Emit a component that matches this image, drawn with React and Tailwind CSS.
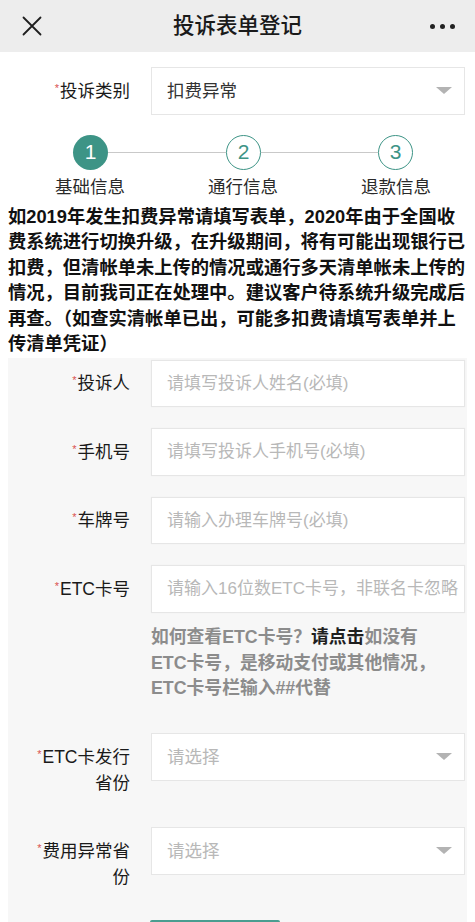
import React from "react";

const FONT = "font-['Liberation_Sans','Noto_Sans_CJK_SC',sans-serif]";

function Star() {
  return (
    <span className="relative top-[-5px] text-[11px] leading-none text-[#d9534f] mr-[1px]">*</span>
  );
}

function Caret() {
  return (
    <svg width="16" height="7" viewBox="0 0 16 7" className="shrink-0">
      <path d="M0 0 L16 0 L8 7 Z" fill="#b3b3b3" />
    </svg>
  );
}

function TextBox({ placeholder }) {
  return (
    <div className="w-[314px] h-[47.5px] bg-white border border-[#e6e6e6] flex items-center pl-[15px] overflow-hidden whitespace-nowrap text-[17px] text-[#b8b8b8] shadow-[0_0_1px_rgba(0,0,0,0.05)]">
      {placeholder}
    </div>
  );
}

function SelectBox({ value, placeholder }) {
  return (
    <div className="w-[314px] h-[47.5px] bg-white border border-[#e6e6e6] flex items-center justify-between pl-[15px] pr-[12px] text-[17.5px]">
      <span className={value ? "text-[#333]" : "text-[#b8b8b8]"}>{value || placeholder}</span>
      <Caret />
    </div>
  );
}

function Row({ label, children }) {
  return (
    <div className="flex items-center">
      <div className="w-[122px] text-right text-[17.5px] text-[#1a1a1a] leading-[26px]">
        <Star />
        {label}
      </div>
      <div className="ml-[21px]">{children}</div>
    </div>
  );
}

function TwoLineRow({ line1, line2, children }) {
  return (
    <div className="flex items-start">
      <div className="w-[122px] text-right text-[17.5px] text-[#1a1a1a] leading-[26px] pt-[11px]">
        <Star />
        {line1}
        <br />
        {line2}
      </div>
      <div className="ml-[21px]">{children}</div>
    </div>
  );
}

function Circle({ n, active }) {
  return active ? (
    <div className="w-[35px] h-[35px] rounded-full bg-[#3d9486] flex items-center justify-center text-white text-[21px] font-light shrink-0">
      {n}
    </div>
  ) : (
    <div className="w-[35px] h-[35px] rounded-full bg-white border-[1.5px] border-[#3d9486] flex items-center justify-center text-[#3d9486] text-[21px] font-light shrink-0">
      {n}
    </div>
  );
}

export default function App() {
  return (
    <div className={`${FONT} w-[475px] bg-white text-[#222]`}>
      {/* Header */}
      <div className="h-[52px] bg-[#ededed] flex items-center">
        <div className="w-[70px] pl-[22px] flex items-center">
          <svg width="20" height="20" viewBox="0 0 20 20">
            <path d="M1.5 1.5 L18.5 18.5 M18.5 1.5 L1.5 18.5" stroke="#1f1f1f" strokeWidth="1.8" strokeLinecap="round" />
          </svg>
        </div>
        <div className="flex-1 text-center text-[21.5px] text-[#1a1a1a] font-medium">投诉表单登记</div>
        <div className="w-[70px] flex items-center justify-end pr-[20px] gap-[5px]">
          <span className="w-[5px] h-[5px] rounded-full bg-[#222]" />
          <span className="w-[5px] h-[5px] rounded-full bg-[#222]" />
          <span className="w-[5px] h-[5px] rounded-full bg-[#222]" />
        </div>
      </div>

      {/* Category */}
      <div className="flex items-center mt-[15px]">
        <div className="w-[130px] text-right text-[17.5px] text-[#1a1a1a]">
          <Star />
          投诉类别
        </div>
        <div className="ml-[21px]">
          <SelectBox value="扣费异常" />
        </div>
      </div>

      {/* Stepper */}
      <div className="mt-[20px]">
        <div className="flex items-center pl-[73px]">
          <Circle n="1" active />
          <div className="w-[118px] h-px bg-[#c9c9c9]" />
          <Circle n="2" />
          <div className="w-[117px] h-px bg-[#c9c9c9]" />
          <Circle n="3" />
        </div>
        <div className="flex pl-[40px] gap-[53px] mt-[5px] text-[17.5px] leading-[24px] text-[#2a2a2a]">
          <div className="w-[100px] text-center">基础信息</div>
          <div className="w-[100px] text-center">通行信息</div>
          <div className="w-[100px] text-center">退款信息</div>
        </div>
      </div>

      {/* Notice */}
      <p className="mt-[5px] px-[8px] text-[18.3px] leading-[25.5px] font-bold text-[#111] whitespace-nowrap">
        如2019年发生扣费异常请填写表单，2020年由于全国收
        <br />
        费系统进行切换升级，在升级期间，将有可能出现银行已
        <br />
        扣费，但清帐单未上传的情况或通行多天清单帐未上传的
        <br />
        情况，目前我司正在处理中。建议客户待系统升级完成后
        <br />
        再查。（如查实清帐单已出，可能多扣费请填写表单并上
        <br />
        传清单凭证）
      </p>

      {/* Form card */}
      <div className="mt-[1px] ml-[8px] w-[459px] bg-[#f7f7f7] pt-[2px] pb-[40px]">
        <div className="flex flex-col gap-[21px]">
          <Row label="投诉人">
            <TextBox placeholder="请填写投诉人姓名(必填)" />
          </Row>
          <Row label="手机号">
            <TextBox placeholder="请填写投诉人手机号(必填)" />
          </Row>
          <Row label="车牌号">
            <TextBox placeholder="请输入办理车牌号(必填)" />
          </Row>
          <Row label="ETC卡号">
            <TextBox placeholder="请输入16位数ETC卡号，非联名卡忽略" />
          </Row>
        </div>

        <p className="ml-[143px] mt-[12.5px] text-[17.8px] leading-[25.5px] font-bold text-[#8c8c8c] whitespace-nowrap">
          如何查看ETC卡号？<span className="text-[#1f1f1f]">请点击</span>如没有
          <br />
          ETC卡号，是移动支付或其他情况，
          <br />
          ETC卡号栏输入##代替
        </p>

        <div className="mt-[31.5px] flex flex-col gap-[31px]">
          <TwoLineRow line1="ETC卡发行" line2="省份">
            <SelectBox placeholder="请选择" />
          </TwoLineRow>
          <TwoLineRow line1="费用异常省" line2="份">
            <SelectBox placeholder="请选择" />
          </TwoLineRow>
        </div>

        <div className="mt-[30px] ml-[142px] w-[130px] h-[44px] bg-[#4a9d90] rounded-[2px]" />
      </div>
    </div>
  );
}
